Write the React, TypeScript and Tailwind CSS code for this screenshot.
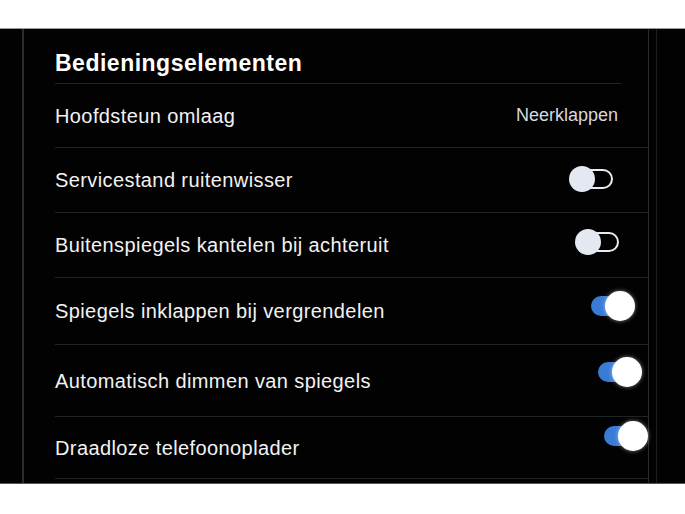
import React from "react";

type Row = {
  label: string;
  kind: "text" | "off" | "on";
  value?: string;
  row: string;
  ctl: string;
};

const ROWS: Row[] = [
  { label: "Hoofdsteun omlaag", kind: "text", value: "Neerklappen", row: "h-[64px] pr-[30px]", ctl: "mb-0" },
  { label: "Servicestand ruitenwisser", kind: "off", row: "h-[65px] pr-[35px]", ctl: "mb-[2px]" },
  { label: "Buitenspiegels kantelen bij achteruit", kind: "off", row: "h-[65px] pr-[29px]", ctl: "mb-[6px]" },
  { label: "Spiegels inklappen bij vergrendelen", kind: "on", row: "h-[67px] pr-[13px]", ctl: "mb-[10px]" },
  { label: "Automatisch dimmen van spiegels", kind: "on", row: "h-[72px] pr-[6px]", ctl: "mb-[18px]" },
  { label: "Draadloze telefoonoplader", kind: "on", row: "h-[62px] pr-[0px]", ctl: "mb-[24px]" },
];

const Toggle = ({ on }: { on: boolean }) =>
  on ? (
    <div className="relative w-[44px] h-[30px] flex items-center">
      <div className="w-[36px] h-[20px] rounded-full bg-[#3a7bd5]" />
      <div className="absolute right-0 top-0 w-[30px] h-[30px] rounded-full bg-white shadow-[0_0_4px_rgba(255,255,255,0.5)]" />
    </div>
  ) : (
    <div className="relative w-[44px] h-[26px] flex items-center justify-end">
      <div className="w-[36px] h-[20px] rounded-full border-2 border-[#e8ebf2]" />
      <div className="absolute left-0 top-0 w-[26px] h-[26px] rounded-full bg-[#e4e8f1]" />
    </div>
  );

const App = () => {
  return (
    <div
      className="w-[685px] h-[514px] bg-white flex flex-col overflow-hidden"
      style={{ fontFamily: '"Liberation Sans", Arial, sans-serif' }}
    >
      <div className="h-[29px] shrink-0 border-b border-[#9a9a9a]" />
      <div className="h-[455px] bg-[#020203] flex border-b border-[#555] overflow-hidden">
        <div className="w-[22px] shrink-0" />
        <div className="w-[2px] bg-[#2c2c2e] shrink-0" />
        <div className="flex-1 flex flex-col pl-[31px]">
          <div className="h-[55px] shrink-0 flex items-end pb-[8px] border-b border-[#222327] mr-[27px]">
            <h1 className="text-[23px] font-bold text-white tracking-[0.5px] leading-none">
              Bedieningselementen
            </h1>
          </div>
          {ROWS.map((row) => (
            <div
              key={row.label}
              className={`shrink-0 flex items-center justify-between border-b border-[#222327] ${row.row}`}
            >
              <span className="text-[20px] text-[#f2f2f2] tracking-[0.4px]">{row.label}</span>
              <div className={row.ctl}>
                {row.kind === "text" ? (
                  <span className="text-[18px] text-[#d8d8da]">{row.value}</span>
                ) : (
                  <Toggle on={row.kind === "on"} />
                )}
              </div>
            </div>
          ))}
        </div>
        <div className="w-px bg-[#2a2a2c] shrink-0" />
        <div className="w-[7px] shrink-0" />
        <div className="w-px bg-[#1e1e20] shrink-0" />
        <div className="w-[28px] shrink-0" />
      </div>
      <div className="flex-1" />
    </div>
  );
};

export default App;
